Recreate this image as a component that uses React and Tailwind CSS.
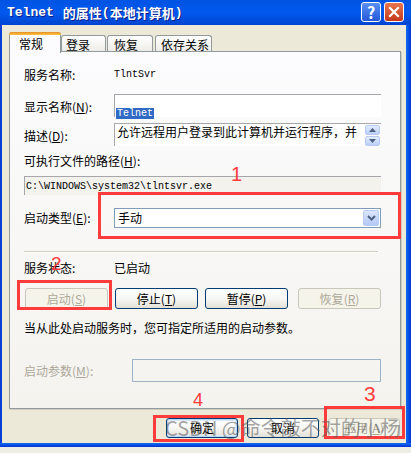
import React from "react";

const cjk = "font-['Noto_Sans_CJK_SC',sans-serif]";
const mono = "font-['Liberation_Mono','Noto_Sans_CJK_SC',monospace]";

function Key({ k }) {
  return (
    <span>
      (<span className="underline">{k}</span>)
    </span>
  );
}

function XPButton({ children, disabled, primary, className = "" }) {
  const look = disabled
    ? "border-[#C9C7BA] text-[#ACA899] bg-[#F5F4EA]"
    : "border-[#003C74] text-black bg-linear-to-b from-white via-[#F7F7F4] to-[#E3E1D7]";
  return (
    <div
      className={`flex items-center justify-center rounded-[3px] border text-[12px] leading-[16px] ${look} ${
        primary ? "shadow-[inset_0_0_0_1px_#BCD4F6,inset_0_0_0_2px_#DCE9FB]" : ""
      } ${className}`}
    >
      {children}
    </div>
  );
}

function Tab({ label, active, className = "" }) {
  if (active) {
    return (
      <div
        className={`relative z-10 h-[21px] w-[52px] self-start rounded-t-[3px] border border-b-0 border-[#919B9C] bg-[#FCFCFE] pl-[9px] text-[12px] leading-[20px] ${className}`}
      >
        <div className="absolute left-[-1px] right-[-1px] top-[-1px] h-[3px] rounded-t-[3px] bg-linear-to-b from-[#E68B2C] to-[#FFC73C]" />
        <span className="relative top-[1px]">{label}</span>
      </div>
    );
  }
  return (
    <div
      className={`mt-[3px] h-[17px] rounded-t-[3px] border border-b-0 border-[#919B9C] bg-linear-to-b from-white to-[#ECEBE6] pl-[4px] text-[12px] leading-[17px] ${className}`}
    >
      {label}
    </div>
  );
}

function Label({ children, gray }) {
  return (
    <div className={`text-[12px] leading-[16px] ${gray ? "text-[#ACA899]" : "text-black"}`}>
      {children}
    </div>
  );
}

export default function App() {
  return (
    <div className={`relative h-[453px] w-[411px] overflow-hidden bg-[#ECE9D8] ${cjk}`}>
      {/* title bar */}
      <div className="flex h-[25px] items-center justify-between bg-linear-to-b from-[#0054E3] via-[#0058EE] to-[#0046D0] pl-[7px] pr-[7px]">
        <div className="flex items-center text-[13px] font-bold leading-[16px] text-white [text-shadow:1px_1px_#0A1E8A]">
          <span className={mono}>Telnet</span>
          <span className="ml-[9px]">的属性</span>
          <span className={mono}>(</span>
          <span>本地计算机</span>
          <span className={mono}>)</span>
        </div>
        <div className="flex items-center gap-[3px] pb-[2px]">
          <div className="flex h-[20px] w-[20px] items-center justify-center rounded-[3px] border border-white bg-linear-to-b from-[#5A8FF4] to-[#2457D8] text-[16px] font-bold leading-none text-white">
            ?
          </div>
          <div className="flex h-[20px] w-[20px] items-center justify-center rounded-[3px] border border-white bg-linear-to-b from-[#E8754E] to-[#C4381A]">
            <svg width="12" height="12" viewBox="0 0 12 12">
              <path d="M2 2 L10 10 M10 2 L2 10" stroke="white" strokeWidth="2.2" strokeLinecap="square" />
            </svg>
          </div>
        </div>
      </div>

      {/* body */}
      <div className="flex h-[418px]">
        <div className="w-[2px] bg-[#0B3FD8]" />
        <div className="flex w-[404px] flex-col pl-[7px] pt-[7px]">
          {/* tabs */}
          <div className="flex h-[20px] items-start">
            <Tab label="常规" active />
            <Tab label="登录" className="w-[45px]" />
            <Tab label="恢复" className="ml-[1px] w-[46px] pl-[6px]" />
            <Tab label="依存关系" className="ml-[2px] w-[57px] pl-[5px]" />
          </div>

          {/* tab panel */}
          <div className="mt-[-1px] flex h-[358px] w-[392px] flex-col border border-[#919B9C] bg-linear-to-b from-[#FCFCFE] to-[#F4F3EE] pl-[14px] pr-[19px] shadow-[1px_1px_0_#D0CEC4]">
            <div className="mt-[15px] flex h-[16px] items-center">
              <div className="w-[90px]">
                <Label>服务名称:</Label>
              </div>
              <span className={`${mono} text-[10px] leading-[16px]`}>TlntSvr</span>
            </div>

            <div className="mt-[11px] flex h-[23px] items-center">
              <div className="w-[90px] pt-[2px]">
                <Label>
                  显示名称<Key k="N" />:
                </Label>
              </div>
              <div className="h-[23px] flex-1 border-l border-t border-[#A7A6AA] bg-white pl-[1px] pt-[2px]">
                <span className={`${mono} bg-[#316AC5] px-[1px] text-[10px] leading-[12px] text-white`}>Telnet</span>
              </div>
            </div>

            <div className="mt-[6px] flex h-[23px] items-center">
              <div className="w-[90px] pt-[2px]">
                <Label>
                  描述<Key k="D" />:
                </Label>
              </div>
              <div className="flex h-[23px] flex-1 border-l border-t border-[#A7A6AA] bg-white pl-[2px]">
                <div className="flex-1 overflow-hidden whitespace-nowrap text-[12px] leading-[16px]">
                  允许远程用户登录到此计算机并运行程序，并
                </div>
                <div className="flex w-[16px] flex-col gap-[1px] pr-[1px] pt-[1px]">
                  <div className="flex h-[10px] items-center justify-center rounded-[2px] border border-[#B7CBF5] bg-linear-to-b from-[#E3ECFD] to-[#BBCEF7]">
                    <svg width="7" height="4" viewBox="0 0 7 4">
                      <path d="M0 4 L3.5 0 L7 4 Z" fill="#4D6185" />
                    </svg>
                  </div>
                  <div className="flex h-[10px] items-center justify-center rounded-[2px] border border-[#B7CBF5] bg-linear-to-b from-[#E3ECFD] to-[#BBCEF7]">
                    <svg width="7" height="4" viewBox="0 0 7 4">
                      <path d="M0 0 L3.5 4 L7 0 Z" fill="#4D6185" />
                    </svg>
                  </div>
                </div>
              </div>
            </div>

            <div className="mt-[7px] h-[16px]">
              <Label>
                可执行文件的路径<Key k="H" />:
              </Label>
            </div>

            <div className={`${mono} mt-[7px] flex h-[19px] items-center border-l border-t border-[#A7A6AA] bg-[#F3F2ED] pl-[1px] text-[10px]`}>
              C:\WINDOWS\system32\tlntsvr.exe
            </div>

            <div className="mt-[13px] flex h-[20px] items-center">
              <div className="w-[90px]">
                <Label>
                  启动类型<Key k="E" />:
                </Label>
              </div>
              <div className="flex h-[20px] flex-1 items-center justify-between border border-[#7F9DB9] bg-white pl-[3px] pr-[1px]">
                <span className="text-[12px] leading-[16px]">手动</span>
                <div className="flex h-[16px] w-[16px] items-center justify-center rounded-[2px] border border-[#B7CBF5] bg-linear-to-b from-[#DCE7FD] to-[#B4C8F6]">
                  <svg width="9" height="6" viewBox="0 0 9 6">
                    <path d="M1 1 L4.5 4.5 L8 1" fill="none" stroke="#4D6185" strokeWidth="2" />
                  </svg>
                </div>
              </div>
            </div>

            <div className="mr-[3px] mt-[23px] h-[2px] border-t border-b border-t-[#D0D0BF] border-b-white" />

            <div className="mt-[7px] flex h-[16px] items-center">
              <div className="w-[90px]">
                <Label>服务状态:</Label>
              </div>
              <Label>已启动</Label>
            </div>

            <div className="mt-[12px] flex h-[21px]">
              <XPButton disabled className="ml-[1px] w-[83px]">
                启动<Key k="S" />
              </XPButton>
              <XPButton className="ml-[7px] w-[83px]">
                停止<Key k="T" />
              </XPButton>
              <XPButton className="ml-[7px] w-[83px]">
                暂停<Key k="P" />
              </XPButton>
              <XPButton disabled className="ml-[10px] w-[83px]">
                恢复<Key k="R" />
              </XPButton>
            </div>

            <div className="mt-[11px] h-[16px]">
              <Label>当从此处启动服务时，您可指定所适用的启动参数。</Label>
            </div>

            <div className="mt-[23px] flex h-[23px] items-center">
              <div className="w-[108px]">
                <Label gray>
                  启动参数<Key k="M" />:
                </Label>
              </div>
              <div className="h-[23px] flex-1 border border-[#9DB1C7] bg-transparent" />
            </div>
          </div>

          {/* dialog buttons */}
          <div className="mt-[9px] flex h-[20px] pl-[157px]">
            <XPButton primary className="h-[20px] w-[72px]">
              确定
            </XPButton>
            <XPButton className="ml-[9px] h-[20px] w-[72px]">
              取消
            </XPButton>
            <XPButton disabled className="ml-[9px] h-[20px] w-[72px]">
              应用<Key k="A" />
            </XPButton>
          </div>
        </div>
        <div className="w-[5px] bg-linear-to-r from-[#166AEE] to-[#0831D9]" />
      </div>

      {/* bottom border */}
      <div className="h-[4px] bg-linear-to-b from-[#166AEE] to-[#0831D9]" />
      <div className="h-[6px] bg-[#EEEDE6]" />

      {/* red annotations */}
      <div className="absolute left-[98px] top-[192px] h-[47px] w-[303px] border-[3px] border-[#FF3B3B]" />
      <div className="absolute left-[17px] top-[280px] h-[30px] w-[95px] border-[3px] border-[#FF3B3B]" />
      <div className="absolute left-[324px] top-[406px] h-[33px] w-[81px] border-[3px] border-[#FF3B3B]" />
      <div className="absolute left-[153px] top-[415px] h-[27px] w-[91px] border-[3px] border-[#FF3B3B]" />

      <div className="absolute left-[231px] top-[164px] font-['Liberation_Sans',sans-serif] text-[20px] leading-[20px] text-[#FF3B3B]">1</div>
      <div className="absolute left-[51px] top-[254px] font-['Liberation_Sans',sans-serif] text-[19px] leading-[19px] text-[#FF3B3B]">2</div>
      <div className="absolute left-[364px] top-[383px] font-['Liberation_Sans',sans-serif] text-[21px] leading-[21px] text-[#FF3B3B]">3</div>
      <div className="absolute left-[193px] top-[391px] font-['Liberation_Sans',sans-serif] text-[18px] leading-[18px] text-[#FF3B3B]">4</div>

      {/* watermark */}
      <div className="absolute left-[165px] top-[414px] whitespace-nowrap text-[20px] leading-[28px] text-[rgba(90,90,90,0.55)]">
        CSDN @命令敲不对的小杨
      </div>
    </div>
  );
}
